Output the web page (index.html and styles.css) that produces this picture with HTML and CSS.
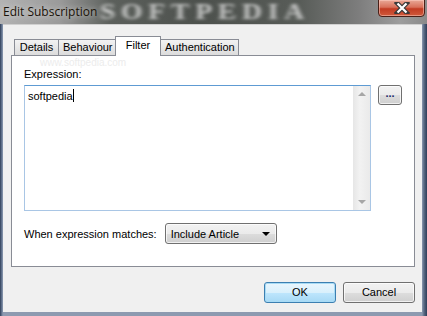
FILE: index.html
```html
<!DOCTYPE html>
<html lang="en">
<head>
    <meta charset="UTF-8">
    <title>Edit Subscription</title>
    <link rel="stylesheet" href="styles.css">
</head>
<body>
    <div class="window">
        <!-- Title bar -->
        <div class="titlebar">
            <span class="watermark">SOFTPEDIA</span>
            <span class="title">Edit Subscription</span>
            <div class="close-btn">
                <svg width="16" height="12" viewBox="0 0 16 12">
                    <path d="M3 1 L13 11 M13 1 L3 11" stroke="#3a3a3a" stroke-width="4.5" stroke-linecap="square"/>
                    <path d="M3.5 1.5 L12.5 10.5 M12.5 1.5 L3.5 10.5" stroke="#ffffff" stroke-width="2.2"/>
                </svg>
            </div>
        </div>

        <div class="client">
            <div class="tabs">
                <div class="tab">Details</div>
                <div class="tab">Behaviour</div>
                <div class="tab active">Filter</div>
                <div class="tab">Authentication</div>
            </div>

            <div class="panel">
                <span class="site-mark">www.softpedia.com</span>
                <div class="label">Expression:</div>
                <div class="expr-row">
                    <div class="textarea">
                        <div class="text">softpedia<span class="caret"></span></div>
                        <div class="scrollbar">
                            <span class="arrow up"></span>
                            <span class="arrow down"></span>
                        </div>
                    </div>
                    <div class="btn small-btn">...</div>
                </div>

                <div class="match-row">
                    <span>When expression matches:</span>
                    <div class="combo">
                        <span>Include Article</span>
                        <span class="combo-arrow"></span>
                    </div>
                </div>
            </div>

            <div class="footer">
                <div class="btn default">OK</div>
                <div class="btn">Cancel</div>
            </div>
        </div>
    </div>
</body>
</html>
```

FILE: styles.css
```css
body {
    margin: 0;
    padding: 0;
    width: 427px;
    height: 316px;
    overflow: hidden;
    font-family: "Liberation Sans", Arial, sans-serif;
    font-size: 11px;
    color: #000;
}

.window {
    width: 427px;
    height: 316px;
    display: flex;
    flex-direction: column;
    background: linear-gradient(to right, #2e3d58 0, #6e7f99 2px, #8d9ab0 3px, #8d9ab0 422px, #5a6a84 424px, #2e3d58 427px);
}

/* Title bar with blurred glass */
.titlebar {
    position: relative;
    height: 24px;
    overflow: hidden;
    background: linear-gradient(to right, #b3b3b3 0, #9a9a9a 60px, #5c605c 110px, #4d514d 200px, #585c58 300px, #7e7e7e 360px, #9d9d9d 400px, #8a8a8a 427px);
}

.watermark {
    position: absolute;
    left: 100px;
    top: 1px;
    line-height: 22px;
    font-family: "Liberation Serif", serif;
    font-weight: bold;
    font-size: 19px;
    letter-spacing: 4px;
    color: #c9cac9;
    transform: scale(1.45, 1.2);
    transform-origin: left center;
    filter: blur(1.4px);
}

.title {
    position: absolute;
    left: 3px;
    top: 3px;
    font-family: "Open Sans", sans-serif;
    font-size: 12px;
    color: #1a1208;
    text-shadow: 0 0 6px rgba(255, 255, 255, 0.8);
}

.close-btn {
    position: absolute;
    left: 378px;
    top: -1px;
    width: 45px;
    height: 16px;
    border: 1px solid #4a2018;
    border-radius: 0 0 4px 4px;
    background: linear-gradient(to bottom, #e9a897 0, #d8705a 45%, #c23b22 55%, #cf5a3c 100%);
    box-shadow: inset 0 0 0 1px rgba(255, 210, 200, 0.5);
    display: flex;
    justify-content: center;
    align-items: center;
}

/* Client area */
.client {
    flex: 1;
    margin: 0 5px 4px 3px;
    background: #f0f0f0;
    border-top: 1px solid #d0d0d0;
    display: flex;
    flex-direction: column;
    padding: 10px 7px 0 8px;
}

.tabs {
    display: flex;
    align-items: flex-end;
    height: 20px;
    padding-left: 3px;
    position: relative;
    z-index: 1;
}

.tab {
    height: 15px;
    padding: 0 4px;
    line-height: 15px;
    border: 1px solid #898c95;
    border-bottom: none;
    margin-right: -1px;
    background: linear-gradient(to bottom, #f2f2f2, #dcdcdc);
    text-align: center;
}

.tab:nth-child(1) { width: 35px; }
.tab:nth-child(2) { width: 49px; }
.tab:nth-child(4) { width: 69px; }

.tab.active {
    height: 19px;
    line-height: 17px;
    width: 36px;
    margin: 0 -1px 0 -1px;
    background: #ffffff;
    position: relative;
    top: 1px;
    z-index: 2;
}

.panel {
    position: relative;
    height: 212px;
    background: #ffffff;
    border: 1px solid #898c95;
    padding: 11px 0 0 12px;
    box-sizing: border-box;
}

.site-mark {
    position: absolute;
    left: 28px;
    top: 1px;
    font-size: 10px;
    color: #ececec;
}

.label {
    height: 15px;
    line-height: 15px;
}

.expr-row {
    display: flex;
    align-items: flex-start;
    gap: 7px;
    margin-top: 3px;
}

.textarea {
    width: 345px;
    height: 124px;
    border: 1px solid #a9c6e5;
    border-top-color: #5e9bd3;
    display: flex;
    justify-content: space-between;
}

.text {
    padding: 3px 0 0 3px;
    line-height: 15px;
}

.caret {
    display: inline-block;
    width: 1px;
    height: 13px;
    background: #000;
    vertical-align: -2px;
}

.scrollbar {
    width: 17px;
    background: linear-gradient(to right, #e6e6e6, #f2f2f2 40%, #eaeaea);
    display: flex;
    flex-direction: column;
    justify-content: space-between;
    align-items: center;
    padding: 6px 0;
    box-sizing: border-box;
}

.arrow {
    width: 0;
    height: 0;
    border-left: 4px solid transparent;
    border-right: 4px solid transparent;
}

.arrow.up { border-bottom: 4px solid #a6a6a6; }
.arrow.down { border-top: 4px solid #a6a6a6; }

.btn {
    width: 70px;
    height: 19px;
    border: 1px solid #707070;
    border-radius: 3px;
    background: linear-gradient(to bottom, #f2f2f2 0, #ebebeb 50%, #dddddd 51%, #cfcfcf 100%);
    box-shadow: inset 0 0 0 1px rgba(255, 255, 255, 0.7);
    text-align: center;
    line-height: 19px;
}

.small-btn {
    width: 22px;
    height: 18px;
    line-height: 14px;
    font-weight: bold;
    color: #1c2a6a;
}

.match-row {
    display: flex;
    align-items: center;
    gap: 8px;
    margin-top: 12px;
}

.combo {
    width: 99px;
    height: 19px;
    padding: 0 6px 0 5px;
    border: 1px solid #707070;
    border-radius: 3px;
    background: linear-gradient(to bottom, #f2f2f2 0, #ebebeb 50%, #dddddd 51%, #cfcfcf 100%);
    box-shadow: inset 0 0 0 1px rgba(255, 255, 255, 0.7);
    display: flex;
    justify-content: space-between;
    align-items: center;
}

.combo-arrow {
    border-left: 4px solid transparent;
    border-right: 4px solid transparent;
    border-top: 4px solid #000;
}

.footer {
    display: flex;
    justify-content: flex-end;
    gap: 7px;
    padding-top: 15px;
}

.btn.default {
    border-color: #3c7fb1;
    box-shadow: inset 0 0 0 1px #a8dbf5;
    background: linear-gradient(to bottom, #eaf6fd 0, #d9f0fc 50%, #bee6fd 51%, #a7d9f5 100%);
}
```
